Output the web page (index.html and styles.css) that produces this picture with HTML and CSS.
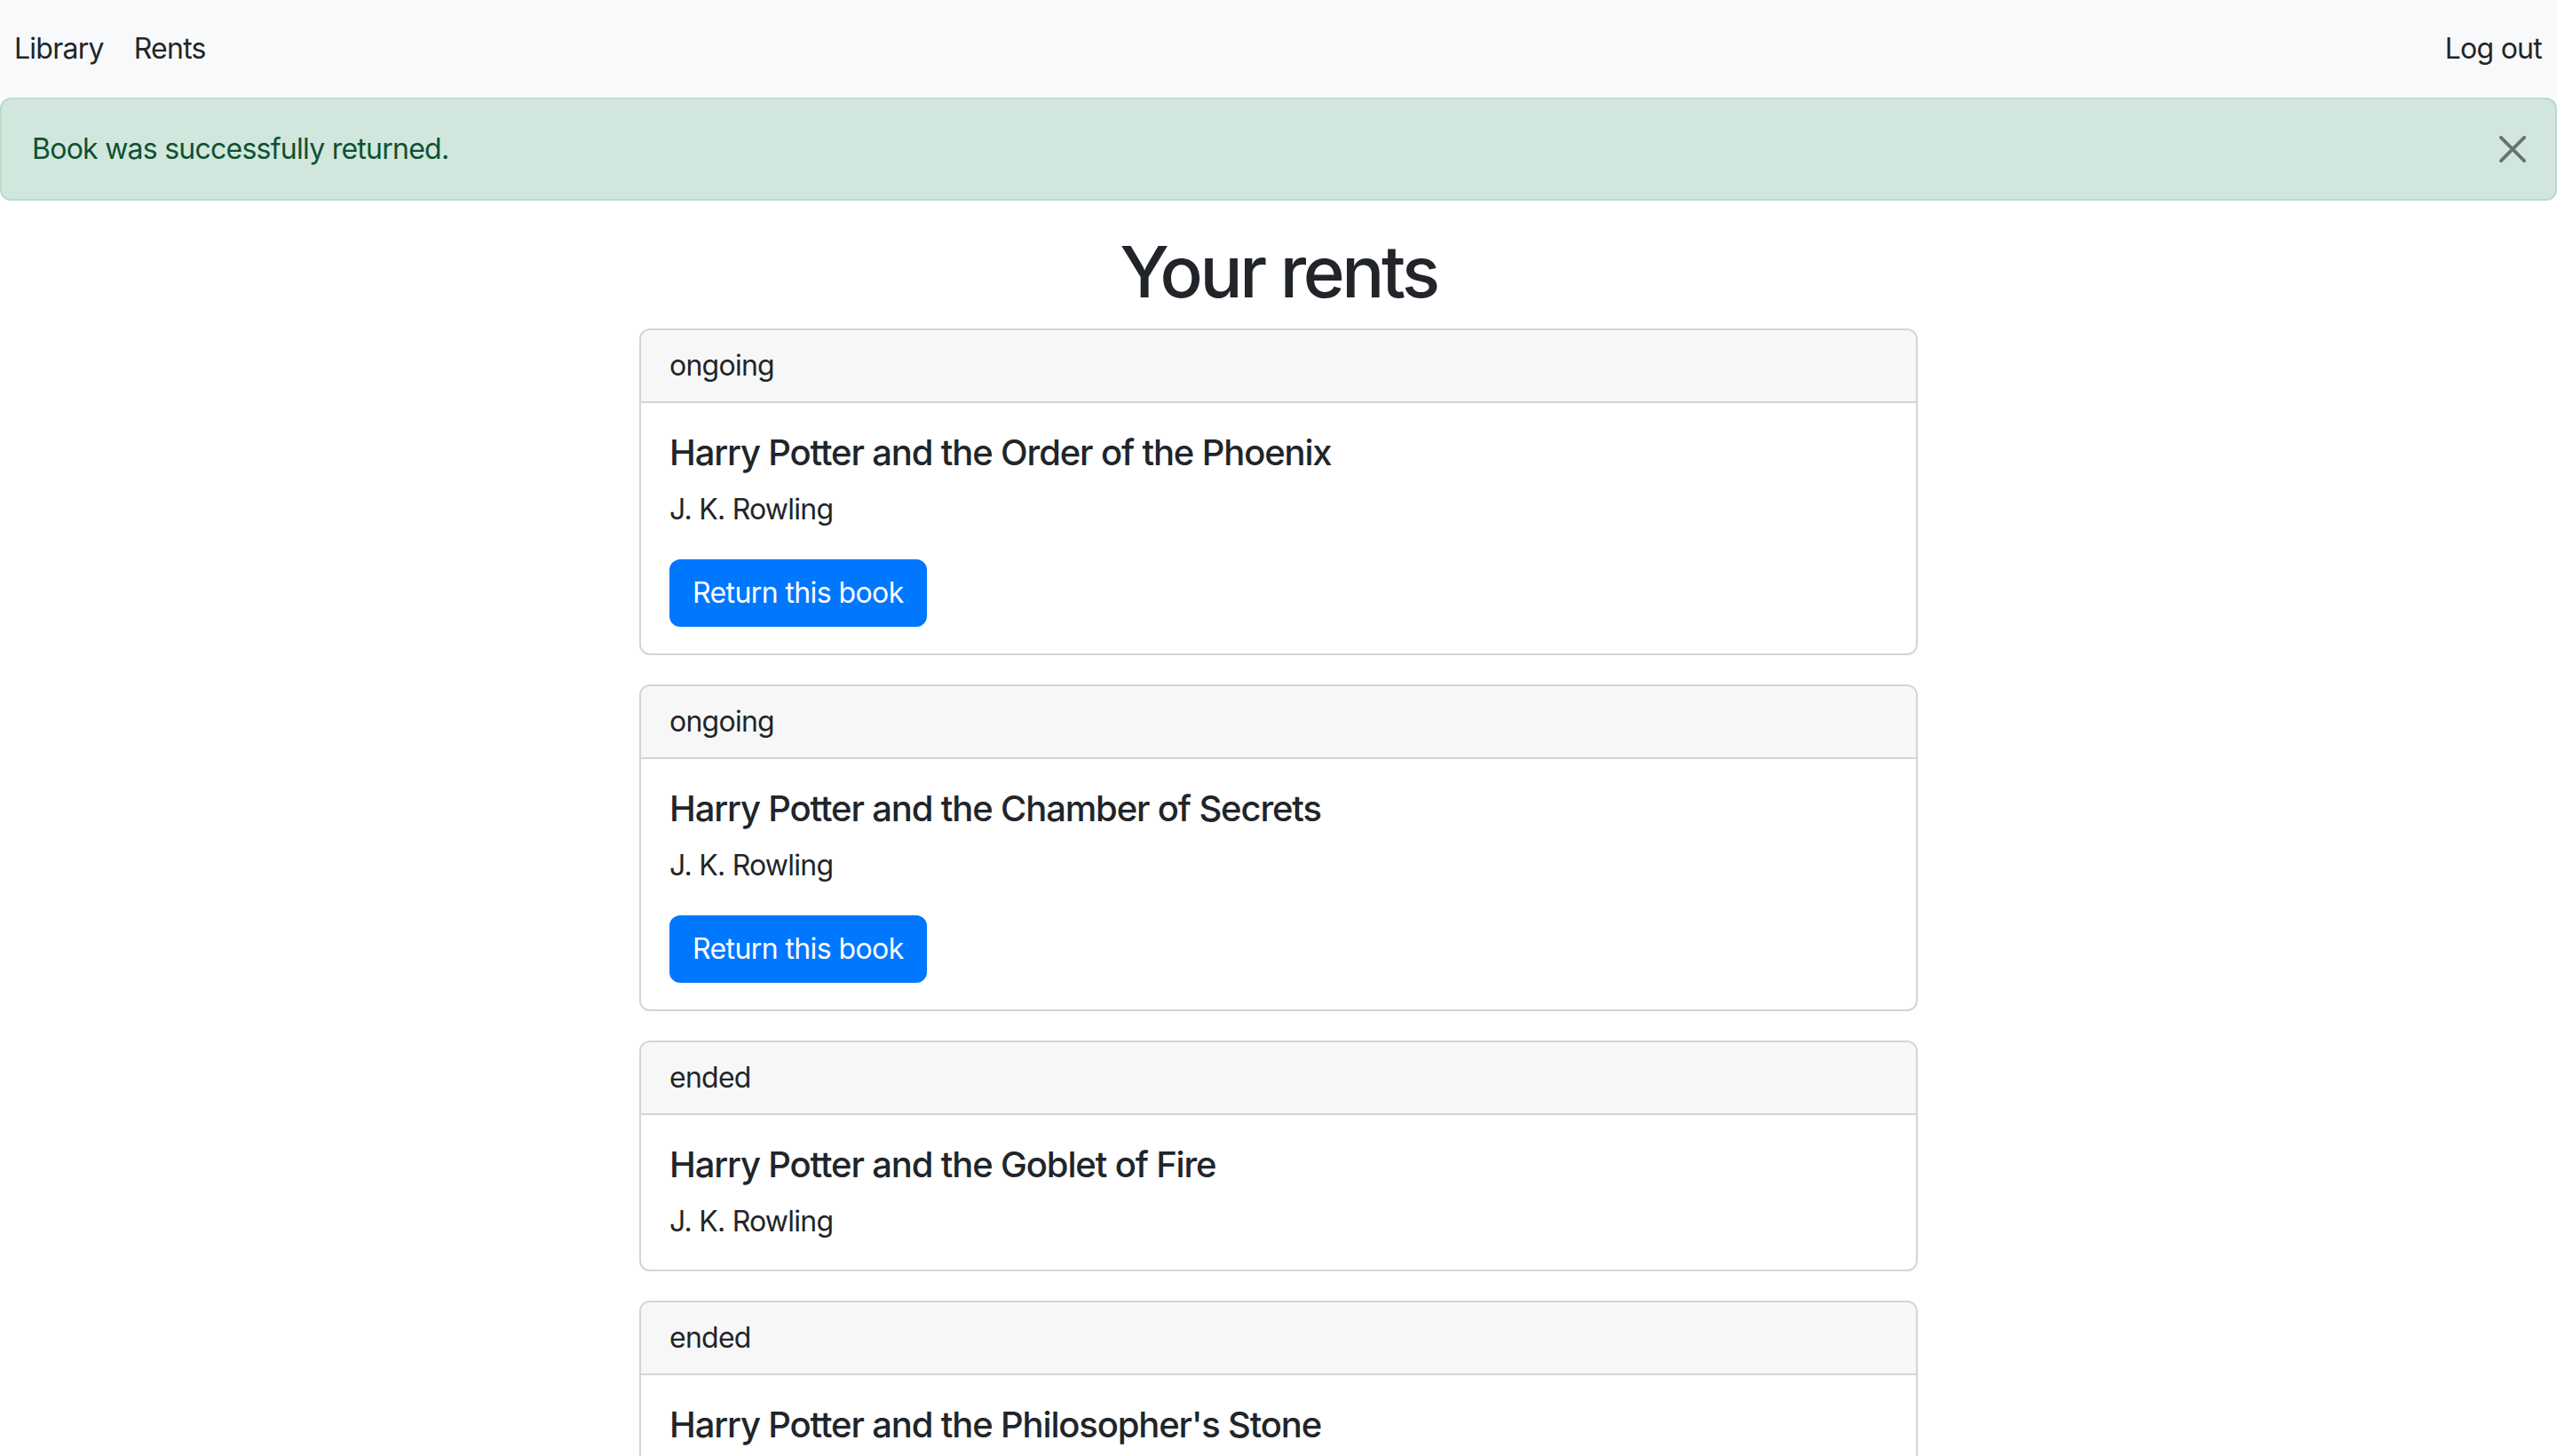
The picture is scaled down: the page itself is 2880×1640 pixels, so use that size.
FILE: index.html
```html
<!DOCTYPE html>
<html lang="en">
<head>
<meta charset="utf-8">
<title>Your rents</title>
<link rel="stylesheet" href="styles.css">
</head>
<body>
<nav class="navbar">
  <div class="nav-left">
    <a class="nav-link" href="#">Library</a>
    <a class="nav-link" href="#">Rents</a>
  </div>
  <a class="nav-link" href="#">Log out</a>
</nav>
<div class="alert">
  <span>Book was successfully returned.</span>
  <button class="btn-close" aria-label="Close">
    <svg viewBox="0 0 16 16" width="30" height="30"><path d="M1 1L15 15M15 1L1 15" stroke="#000" stroke-width="2" stroke-linecap="round" fill="none"/></svg>
  </button>
</div>
<main class="main">
  <h1 class="title">Your rents</h1>
  <div class="list">
    <div class="card">
      <div class="card-header">ongoing</div>
      <div class="card-body">
        <h5 class="card-title">Harry Potter and the Order of the Phoenix</h5>
        <p class="card-text">J. K. Rowling</p>
        <button class="btn">Return this book</button>
      </div>
    </div>
    <div class="card">
      <div class="card-header">ongoing</div>
      <div class="card-body">
        <h5 class="card-title">Harry Potter and the Chamber of Secrets</h5>
        <p class="card-text">J. K. Rowling</p>
        <button class="btn">Return this book</button>
      </div>
    </div>
    <div class="card">
      <div class="card-header">ended</div>
      <div class="card-body">
        <h5 class="card-title">Harry Potter and the Goblet of Fire</h5>
        <p class="card-text last">J. K. Rowling</p>
      </div>
    </div>
    <div class="card">
      <div class="card-header">ended</div>
      <div class="card-body">
        <h5 class="card-title">Harry Potter and the Philosopher's Stone</h5>
        <p class="card-text last">J. K. Rowling</p>
      </div>
    </div>
  </div>
</main>
</body>
</html>
```
FILE: styles.css
```css
* { box-sizing: border-box; }
html, body { margin: 0; padding: 0; }
body {
  font-family: Inter, "Liberation Sans", sans-serif;
  font-size: 32px;
  line-height: 48px;
  letter-spacing: -0.75px;
  color: #212529;
  background: #fff;
}
.navbar {
  height: 110px;
  background: #f8f9fa;
  display: flex;
  align-items: center;
  justify-content: space-between;
  padding: 0 17px 0 16px;
}
.nav-left { display: flex; gap: 34px; }
.nav-link {
  color: #212529;
  text-decoration: none;
  font-size: 32px;
  line-height: 48px;
}
.alert {
  height: 116px;
  background: #d1e7dd;
  border: 2px solid #badbcc;
  border-radius: 12px;
  color: #0f5132;
  display: flex;
  align-items: center;
  justify-content: space-between;
  padding: 0 33px 0 34px;
  margin-bottom: 32px;
}
.btn-close {
  border: 0;
  background: transparent;
  padding: 0;
  width: 30px;
  height: 30px;
  opacity: 0.5;
  display: flex;
}
.main { display: flex; flex-direction: column; align-items: center; }
.title {
  margin: 0 0 16px;
  font-size: 80px;
  line-height: 96px;
  font-weight: 500;
  letter-spacing: -3.4px;
}
.list { width: 1440px; display: flex; flex-direction: column; gap: 33px; }
.card {
  border: 2px solid #d3d4d5;
  border-radius: 12px;
  background: #fff;
  overflow: hidden;
}
.card-header {
  background: #f7f7f7;
  border-bottom: 2px solid #d3d4d5;
  padding: 16px 32px;
  line-height: 48px;
}
.card-body { padding: 32px 32px 30px; }
.card-title {
  margin: 0 0 16px;
  font-size: 40px;
  line-height: 48px;
  font-weight: 500;
  letter-spacing: -1.15px;
}
.card-text { margin: 0 0 32px; }
.card-text.last { margin-bottom: 0; }
.btn {
  font-family: inherit;
  font-size: 32px;
  line-height: 48px;
  letter-spacing: -0.6px;
  color: #fff;
  background: #0077ff;
  border: 2px solid #0077ff;
  border-radius: 12px;
  padding: 12px 24px;
  cursor: pointer;
}
```
